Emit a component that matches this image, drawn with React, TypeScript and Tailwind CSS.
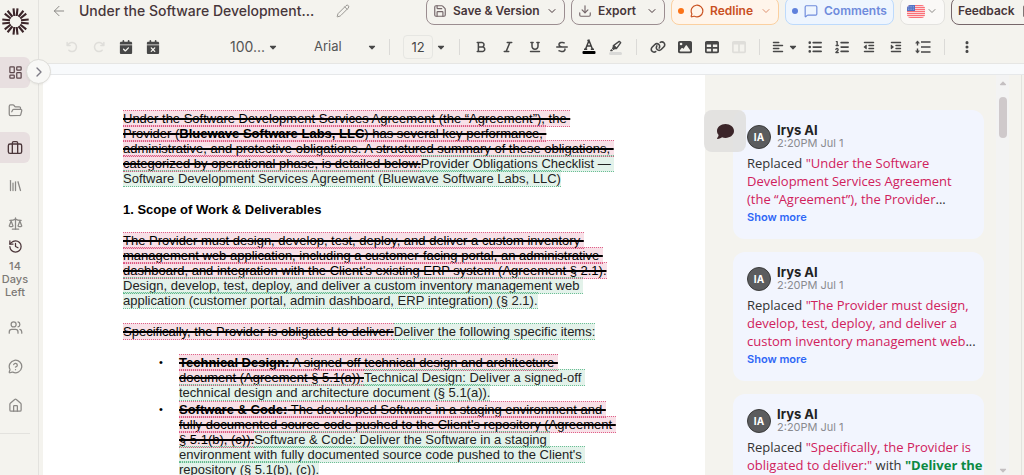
import React from 'react';
import {
    ArrowLeft,
    Bookmark,
    ChevronDown,
    ChevronRight,
    Download,
    FolderOpen,
    History,
    House,
    LayoutDashboard,
    Library,
    Luggage,
    MessageCircle,
    MessageCircleQuestionMark,
    MessageSquare,
    Pencil,
    Save,
    Scale,
    Users
} from 'lucide-react';
import {
    FaAlignLeft,
    FaArrowRotateLeft,
    FaArrowRotateRight,
    FaBold,
    FaCalendarCheck,
    FaCalendarXmark,
    FaCaretDown,
    FaComment,
    FaEllipsisVertical,
    FaHighlighter,
    FaImage,
    FaIndent,
    FaItalic,
    FaLink,
    FaListOl,
    FaListUl,
    FaOutdent,
    FaStrikethrough,
    FaTable,
    FaTableColumns,
    FaUnderline
} from 'react-icons/fa6';

const Logo = () => (
    <svg viewBox="-13.5 -13.5 27 27" className="w-[27px] h-[27px]" fill="none" stroke="#3b2529" strokeWidth="2.1">
        {[0, 45, 90, 135, 180, 225, 270, 315].map((angle) => (
            <g key={angle} transform={`rotate(${angle})`}>
                <path d="M-1.2 -5.500 L-2 -13.200 M1.200 -5.500 L2 -13.200" />
            </g>
        ))}
    </svg>
);

const Flag = () => (
    <svg viewBox="0 0 18 13" className="w-[18px] h-[13px] rounded-sm">
        <rect width="18" height="13" fill="#fbd5d7" />
        {[0, 2, 4, 6, 8, 10, 12].map((y) => (
            <rect key={y} y={y} width="18" height="1" fill="#fb7078" />
        ))}
        <rect width="8" height="6" fill="#5272c4" />
        <path d="M1 1.5h6M1 3h6M1 4.500h6" stroke="#b9c7ec" strokeWidth="0.6" strokeDasharray="0.8 0.9" />
    </svg>
);

const LineSpacingIcon = () => (
    <svg viewBox="0 0 16 14" className="w-4 h-3.5" fill="none" stroke="currentColor" strokeWidth="1.4">
        <path d="M6 2h9.500M6 7h9.500M6 12h9.500" />
        <path d="M2.500 1.500v4M2.500 8.500v4" />
        <path d="M0.500 3.200 2.500 0.800 4.500 3.200zM0.500 10.800l2 2.400 2-2.400z" fill="currentColor" strokeWidth="0.4" />
    </svg>
);

const TextColorIcon = () => (
    <svg viewBox="0 0 14 16" className="w-3.5 h-4">
        <path
            d="M2 10.300h3.200M8.800 10.300H12M3.600 10 7 1.500 10.400 10M4.800 7h4.400M5.300 1.500H7"
            fill="none"
            stroke="#3f3f3f"
            strokeWidth="1.500"
        />
        <rect x="0.500" y="12" width="13" height="3" rx="1" fill="#000" />
    </svg>
);

const HighlightIcon = () => (
    <span className="flex flex-col items-center">
        <FaHighlighter className="w-3 h-3" />
        <span className="w-[13px] h-[3px] rounded-sm bg-[#d9d9d7]" />
    </span>
);

interface ToolProps {
    label: string;
    disabled?: boolean;
    children: React.ReactNode;
}

const Tool: React.FC<ToolProps> = ({ label, disabled, children }) => (
    <button
        aria-label={label}
        disabled={disabled}
        className="w-[27px] h-6 shrink-0 flex items-center justify-center disabled:text-[#dfdeda]"
    >
        {children}
    </button>
);

const Divider = () => <span className="w-px h-4 shrink-0 bg-[#dbdad7]" />;

// Suitcase with two straps, used for the matters entry
const MattersIcon = () => (
    <svg
        viewBox="0 0 24 24"
        className="w-4 h-4"
        fill="none"
        stroke="currentColor"
        strokeWidth="2"
        strokeLinecap="round"
        strokeLinejoin="round"
    >
        <rect x="2" y="6" width="20" height="14" rx="2.500" />
        <path d="M8 20V4.500a2 2 0 0 1 2-2h4a2 2 0 0 1 2 2V20" />
    </svg>
);

const navTop = [
    { label: 'Dashboard', icon: LayoutDashboard, className: 'h-[31px] mt-[22px] bg-[#e8dfe0] text-[#5c474b]' },
    { label: 'Files', icon: FolderOpen, className: 'h-[31px] mt-[7px] text-[#8b8986]' },
    { label: 'Matters', icon: Luggage, className: 'h-[31px] mt-[6px] bg-[#e8dfe0] text-[#4b363a]' },
    { label: 'Library', icon: Library, className: 'h-[31px] mt-[7px] text-[#8b8986]' },
    { label: 'Legal research', icon: Scale, className: 'h-[31px] mt-[7px] text-[#8b8986]' }
];

const navBottom = [
    { label: 'Team', icon: Users },
    { label: 'Help', icon: MessageCircleQuestionMark },
    { label: 'Home', icon: House }
];

const Sidebar = () => (
    <aside className="relative w-[39px] shrink-0 border-r border-[#e3e2de]">
        <div className="w-[30px] pt-2 flex flex-col items-center">
            <Logo />
            {navTop.map((item) => (
                <button
                    key={item.label}
                    aria-label={item.label}
                    className={`w-full shrink-0 rounded-r-md flex items-center justify-center ${item.className}`}
                >
                    {item.label === 'Matters' ? <MattersIcon /> : <item.icon className="w-[15px] h-[15px]" />}
                </button>
            ))}
            <History className="w-[15px] h-[15px] shrink-0 text-[#4b363a]" />
            <p className="mt-1.5 text-[11px] leading-[13px] font-medium text-center text-[#7c7976]">
                14
                <br />
                Days
                <br />
                Left
            </p>
            <div className="w-full mt-3 flex flex-col gap-[7px]">
                {navBottom.map((item) => (
                    <button
                        key={item.label}
                        aria-label={item.label}
                        className="w-full h-8 flex items-center justify-center text-[#8b8986]"
                    >
                        <item.icon className="w-[15px] h-[15px]" />
                    </button>
                ))}
            </div>
            <div className="w-full mt-3 border-t border-[#e3e2de]" />
        </div>
        <button
            aria-label="Expand sidebar"
            className="absolute z-10 top-[59px] left-[26px] w-[25px] h-[25px] rounded-full border border-[#dddcd8] bg-[#f8f8f6] flex items-center justify-center text-[#7d7b86] shadow-xs"
        >
            <ChevronRight className="w-4 h-4" />
        </button>
    </aside>
);

const Header = () => (
    <header className="h-[25px] flex items-end overflow-hidden text-xs font-semibold text-[#47363a]">
        <div className="w-[387px] h-7 pl-3 shrink-0 flex items-center">
            <button aria-label="Back">
                <ArrowLeft className="w-4 h-4 text-[#8b8986]" strokeWidth={1.5} />
            </button>
            <h1 className="w-[257px] ml-3 text-sm font-medium whitespace-nowrap">Under the Software Development...</h1>
            <button aria-label="Rename">
                <Pencil className="w-3.5 h-3.5 text-[#8b8986]" strokeWidth={1.5} />
            </button>
        </div>
        <div className="flex gap-1.5">
            <button className="w-[139px] h-7 shrink-0 px-1.5 flex items-center gap-1.5 rounded-lg border border-[#9b8d90] whitespace-nowrap">
                <Save className="w-3.5 h-3.5 text-[#75676a]" />
                Save &amp; Version
                <ChevronDown className="w-3 h-3 ml-auto" />
            </button>
            <button className="w-[94px] h-7 shrink-0 px-1.5 flex items-center gap-1.5 rounded-lg border border-[#9b8d90]">
                <Download className="w-3.5 h-3.5 text-[#75676a]" />
                Export
                <ChevronDown className="w-3 h-3 ml-auto" />
            </button>
            <button className="w-[108px] h-7 shrink-0 px-1.5 flex items-center gap-1.5 rounded-lg border border-[#fbd0a0] bg-[#fff5eb] text-[#c9501f]">
                <span className="w-1.5 h-1.5 rounded-full bg-[#fb7318]" />
                <MessageCircle className="w-3.5 h-3.5" />
                Redline
                <ChevronDown className="w-3 h-3 ml-auto opacity-60" />
            </button>
            <button className="w-[109px] h-7 shrink-0 px-1.5 flex items-center gap-1.5 rounded-lg border border-[#bddafc] bg-[#eef5fe] text-[#6f8bdc]">
                <span className="w-1.5 h-1.5 rounded-full bg-[#5f81dc]" />
                <MessageSquare className="w-3.5 h-3.5" />
                Comments
            </button>
            <button
                aria-label="Language"
                className="w-[45px] h-7 shrink-0 px-1.5 flex items-center justify-between rounded-lg border border-[#e3e2df] bg-[#faf9f7]"
            >
                <Flag />
                <ChevronDown className="w-3 h-3 text-[#8b8986]" />
            </button>
            <button className="w-[94px] h-7 shrink-0 px-1.5 flex items-center gap-1.5 rounded-lg border border-[#76666a]">
                Feedback
                <Bookmark className="w-3.5 h-3.5" />
            </button>
        </div>
    </header>
);

const Toolbar = () => (
    <div className="h-[39px] shrink-0 pt-1.5 pl-[19px] flex items-center overflow-hidden border-b border-[#e6e6e4] text-[13px] text-[#474747]">
        <Tool label="Undo" disabled><FaArrowRotateLeft className="w-3 h-3" /></Tool>
        <Tool label="Redo" disabled><FaArrowRotateRight className="w-3 h-3" /></Tool>
        <Tool label="Accept change"><FaCalendarCheck className="w-3.5 h-3.5" /></Tool>
        <Tool label="Reject change"><FaCalendarXmark className="w-3.5 h-3.5" /></Tool>

        <div className="ml-16 flex items-center">
            <select aria-label="Zoom" className="w-[38px] appearance-none text-sm text-[#555]" defaultValue="100">
                <option value="100">100...</option>
            </select>
            <FaCaretDown className="w-2.5 h-2.5" />
        </div>
        <div className="ml-9 flex items-center">
            <select aria-label="Font" className="w-[53px] appearance-none text-[13px] text-[#555]" defaultValue="Arial">
                <option>Arial</option>
            </select>
            <FaCaretDown className="w-2.5 h-2.5" />
        </div>
        <span className="w-3" />
        <Divider />
        <input
            aria-label="Font size"
            className="w-[30px] h-6 ml-[13px] shrink-0 rounded-sm border border-[#e6e6e2] text-center text-[13px]"
            defaultValue="12"
        />
        <button aria-label="Font size options" className="w-4 flex justify-center">
            <FaCaretDown className="w-2.5 h-2.5" />
        </button>
        <span className="w-2.5" />
        <Divider />

        <div className="px-[7px] flex">
            <Tool label="Bold"><FaBold className="w-3 h-3" /></Tool>
            <Tool label="Italic"><FaItalic className="w-3 h-3" /></Tool>
            <Tool label="Underline"><FaUnderline className="w-3 h-3" /></Tool>
            <Tool label="Strikethrough"><FaStrikethrough className="w-3 h-3" /></Tool>
            <Tool label="Text color"><TextColorIcon /></Tool>
            <Tool label="Highlight"><HighlightIcon /></Tool>
        </div>
        <Divider />
        <div className="px-[7px] flex">
            <Tool label="Link"><FaLink className="w-4 h-4" /></Tool>
            <Tool label="Image"><FaImage className="w-3.5 h-3.5" /></Tool>
            <Tool label="Table"><FaTable className="w-3.5 h-3.5" /></Tool>
            <Tool label="Table actions" disabled><FaTableColumns className="w-3.5 h-3.5" /></Tool>
        </div>
        <Divider />
        <button aria-label="Align" className="w-[41px] pl-3 shrink-0 flex items-center gap-1">
            <FaAlignLeft className="w-3 h-3" />
            <FaCaretDown className="w-2.5 h-2.5" />
        </button>
        <div className="flex">
            <Tool label="Bullet list"><FaListUl className="w-3.5 h-3.5" /></Tool>
            <Tool label="Numbered list"><FaListOl className="w-3.5 h-3.5" /></Tool>
            <Tool label="Decrease indent"><FaOutdent className="w-3 h-3" /></Tool>
            <Tool label="Increase indent"><FaIndent className="w-3 h-3" /></Tool>
            <Tool label="Line height"><LineSpacingIcon /></Tool>
        </div>
        <span className="w-2" />
        <Divider />
        <span className="w-2" />
        <Tool label="More"><FaEllipsisVertical className="w-3.5 h-3.5" /></Tool>
    </div>
);

const Del = ({ children }: { children: React.ReactNode }) => (
    <del className="border-y border-dotted border-[#df6088] bg-[#cb0e47]/13 decoration-2">{children}</del>
);

const Ins = ({ children }: { children: React.ReactNode }) => (
    <ins className="border-y border-dotted border-[#6bbf95] bg-[#00853d]/11 text-[#222] no-underline">{children}</ins>
);

const DocumentPage = () => (
    <main className="flex-1 min-w-0 pt-9 pl-20 overflow-hidden bg-white font-['Liberation_Sans',Arial,sans-serif] text-[13px] leading-[15px] text-black whitespace-pre">
        <div className="flex flex-col gap-4">
            <p>
                <Del>
                    {'Under the Software Development Services Agreement (the “Agreement”), the \nProvider ('}
                    <strong>Bluewave Software Labs, LLC</strong>
                    {') has several key performance, \nadministrative, and protective obligations. A structured summary of these obligations, \ncategorized by operational phase, is detailed below.'}
                </Del>
                <Ins>{'Provider Obligations Checklist — \nSoftware Development Services Agreement (Bluewave Software Labs, LLC)'}</Ins>
            </p>
            <h2 className="font-bold">1. Scope of Work &amp; Deliverables</h2>
            <p>
                <Del>
                    {"The Provider must design, develop, test, deploy, and deliver a custom inventory \nmanagement web application, including a customer-facing portal, an administrative \ndashboard, and integration with the Client's existing ERP system (Agreement § 2.1)."}
                </Del>
                {'\n'}
                <Ins>
                    {'Design, develop, test, deploy, and deliver a custom inventory management web \napplication (customer portal, admin dashboard, ERP integration) (§ 2.1).'}
                </Ins>
            </p>
            <p>
                <Del>Specifically, the Provider is obligated to deliver:</Del>
                <Ins>Deliver the following specific items:</Ins>
            </p>
            <ul className="pl-9 flex flex-col gap-0.5">
                <li className="flex">
                    <span className="w-5 shrink-0 text-[11px]">•</span>
                    <p>
                        <Del>
                            <strong>Technical Design:</strong>
                            {' A signed-off technical design and architecture \ndocument (Agreement § 5.1(a)).'}
                        </Del>
                        <Ins>{'Technical Design: Deliver a signed-off \ntechnical design and architecture document (§ 5.1(a)).'}</Ins>
                    </p>
                </li>
                <li className="flex">
                    <span className="w-5 shrink-0 text-[11px]">•</span>
                    <p>
                        <Del>
                            <strong>Software &amp; Code:</strong>
                            {" The developed Software in a staging environment and \nfully documented source code pushed to the Client's repository (Agreement \n§ 5.1(b), (c))."}
                        </Del>
                        <Ins>
                            {"Software & Code: Deliver the Software in a staging \nenvironment with fully documented source code pushed to the Client's \nrepository (§ 5.1(b), (c))."}
                        </Ins>
                    </p>
                </li>
            </ul>
        </div>
    </main>
);

const comments = [
    {
        removed: '"Under the Software\nDevelopment Services Agreement\n(the “Agreement”), the Provider',
        rest: '...'
    },
    {
        removed: '"The Provider must design,\ndevelop, test, deploy, and deliver a\ncustom inventory management web',
        rest: '...'
    },
    {
        removed: '"Specifically, the Provider is\nobligated to deliver:"',
        rest: ' with ',
        added: '"Deliver the\nfollowing specific items:"'
    }
];

const CommentsPanel = () => (
    <aside className="relative w-[317px] shrink-0 pl-7 flex justify-between border-r border-[#e3e2de]">
        <div className="w-[251px] pt-[35px] flex flex-col gap-[13px]">
            {comments.map((comment) => (
                <article key={comment.removed} className="h-[129px] shrink-0 p-3.5 rounded-xl bg-[#f2f5fe]">
                    <div className="h-[26px] flex items-center gap-1.5">
                        <span className="w-6 h-6 shrink-0 rounded-full border border-[#3c3c3c] bg-[#5b5c5e] flex items-center justify-center text-[10px] font-bold text-white">
                            IA
                        </span>
                        <div>
                            <h3 className="text-[13px] leading-[13px] font-bold text-[#222]">Irys AI</h3>
                            <p className="text-[11px] leading-[13px] text-[#8a8b90]">2:20PM Jul 1</p>
                        </div>
                    </div>
                    <p className="mt-1 font-['Open_Sans',sans-serif] text-[13px] leading-[18px] whitespace-pre text-[#333]">
                        Replaced <span className="text-[#d0215c]">{comment.removed}</span>
                        {comment.rest}
                        {comment.added && <span className="font-bold text-[#0b8a43]">{comment.added}</span>}
                    </p>
                    <button className="block text-[11px] leading-[18px] font-semibold text-[#2f67f6]">Show more</button>
                </article>
            ))}
        </div>
        <div className="w-[13px] mr-3 pt-1 flex flex-col items-center bg-[#f3f3f3]">
            <FaCaretDown className="w-2.5 h-2.5 rotate-180 text-[#c4bfc1]" />
            <span className="w-2 h-[41px] mt-2 rounded-full bg-[#cfc9cb]" />
            <FaCaretDown className="w-2.5 h-2.5 mt-auto text-[#c4bfc1]" />
        </div>
        <button
            aria-label="Comment thread"
            className="absolute top-[35px] -left-px w-[42px] h-[42px] rounded-lg bg-[#dfdedd]/85 flex items-center justify-center text-[#3b2529]"
        >
            <FaComment className="w-[17px] h-[17px]" />
        </button>
    </aside>
);

export default function App() {
    return (
        <div className="h-screen flex overflow-hidden bg-[#f4f3ee] font-[Inter,sans-serif]">
            <Sidebar />
            <div className="flex-1 min-w-0 flex flex-col">
                <Header />
                <Toolbar />
                <div className="h-[11px] shrink-0 bg-[#f8fafc] border-b border-[#e6e8ea]" />
                <div className="flex-1 min-h-0 pl-1 pr-0.5 flex">
                    <DocumentPage />
                    <CommentsPanel />
                </div>
            </div>
        </div>
    );
}
